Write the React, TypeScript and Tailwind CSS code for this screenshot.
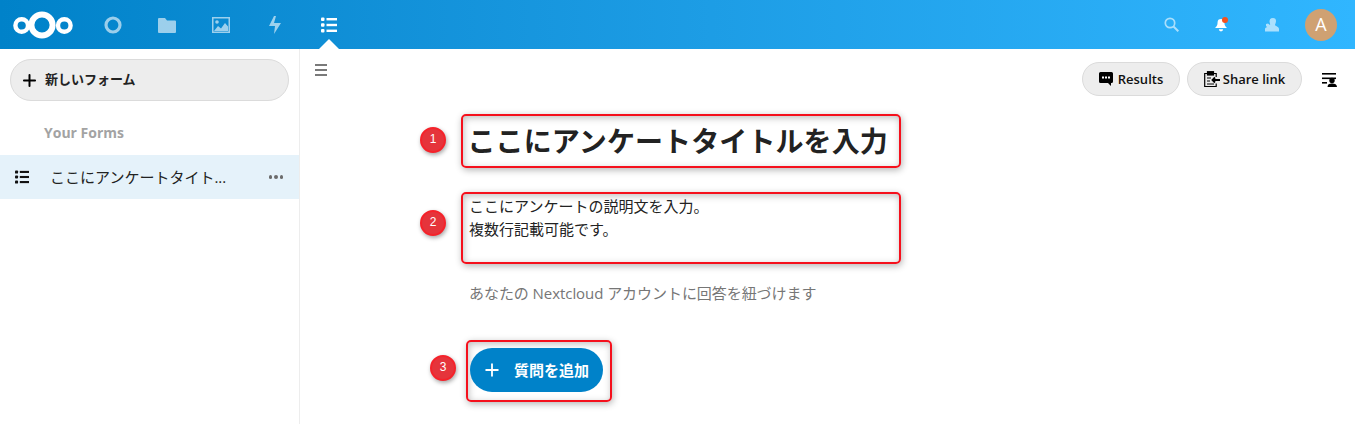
import React from "react";
import { Plus } from "lucide-react";

const font = "font-['Open_Sans','Noto_Sans_CJK_JP',sans-serif]";
const redBox =
  "relative rounded-[5px] border-2 border-[#f5101c] shadow-[1px_2px_7px_rgba(0,0,0,0.3),inset_1px_2px_7px_rgba(0,0,0,0.25)]";

const Logo = () => (
  <svg width="60" height="28" viewBox="0 0 60 28" fill="none" stroke="#fff">
    <circle cx="8.700" cy="14.500" r="6.300" strokeWidth="4.400" />
    <circle cx="29" cy="14" r="10.600" strokeWidth="6" />
    <circle cx="51.300" cy="14.500" r="6.300" strokeWidth="4.400" />
  </svg>
);

const ListIcon = ({ color = "#fff", w = 16 }: { color?: string; w?: number }) => (
  <svg width={w} height={w} viewBox="0 0 16 16" fill={color}>
    <rect x="0" y="0.500" width="3.500" height="3.500" rx="1" />
    <rect x="5.500" y="1" width="10.500" height="2.400" />
    <rect x="0" y="6.200" width="3.500" height="3.500" rx="1" />
    <rect x="5.500" y="6.800" width="10.500" height="2.400" />
    <rect x="0" y="12" width="3.500" height="3.500" rx="1" />
    <rect x="5.500" y="12.600" width="10.500" height="2.400" />
  </svg>
);

const NavIcon = ({ children, active }: { children: React.ReactNode; active?: boolean }) => (
  <div className={`relative flex h-[49px] w-[54px] items-center justify-center ${active ? "" : "opacity-60"}`}>
    {children}
    {active && (
      <div className="absolute bottom-0 left-1/2 h-0 w-0 -translate-x-1/2 border-x-[10px] border-b-[10px] border-x-transparent border-b-white" />
    )}
  </div>
);

const Badge = ({ n, className }: { n: number; className: string }) => (
  <div
    className={`absolute flex h-[26px] w-[26px] items-center justify-center rounded-full border-2 border-[#f5222a] bg-[#e5343b] pb-[2px] text-[12px] text-white shadow-[1px_2px_4px_rgba(0,0,0,0.35)] font-['Liberation_Sans',sans-serif] ${className}`}
  >
    {n}
  </div>
);

const App = () => {
  return (
    <div className={`flex h-[424px] w-[1355px] flex-col overflow-hidden bg-white ${font}`}>
      <header className="flex h-[49px] shrink-0 items-center bg-gradient-to-r from-[#0082c9] to-[#30b6ff]">
        <div className="ml-[13px] mr-[13px] flex items-center">
          <Logo />
        </div>
        <NavIcon>
          <svg width="18" height="18" viewBox="0 0 18 18" fill="none" stroke="#fff" strokeWidth="3.200">
            <circle cx="9" cy="9" r="7" />
          </svg>
        </NavIcon>
        <NavIcon>
          <svg width="18" height="16" viewBox="0 0 18 16" fill="#fff">
            <path d="M1 1h6l2 2.500h8a1 1 0 0 1 1 1V15a1 1 0 0 1-1 1H1a1 1 0 0 1-1-1V2a1 1 0 0 1 1-1z" />
          </svg>
        </NavIcon>
        <NavIcon>
          <svg width="18" height="16" viewBox="0 0 18 16" fill="none">
            <rect x="0.750" y="0.750" width="16.500" height="14.500" stroke="#fff" strokeWidth="1.500" />
            <path d="M2 14l4-5 3 2.500L13 6l3 3.500V14z" fill="#fff" />
            <circle cx="5" cy="5" r="1.800" fill="#fff" />
          </svg>
        </NavIcon>
        <NavIcon>
          <svg width="14" height="18" viewBox="0 0 14 18" fill="#fff">
            <path d="M6 0h2L6 7h7l-7 11 1-8H1z" />
          </svg>
        </NavIcon>
        <NavIcon active>
          <ListIcon />
        </NavIcon>
        <div className="ml-auto flex items-center">
          <div className="flex w-[50px] justify-center opacity-60">
            <svg width="15" height="15" viewBox="0 0 15 15" fill="none" stroke="#fff">
              <circle cx="6" cy="6" r="4.700" strokeWidth="1.700" />
              <path d="M9.500 9.500L14.300 14.300" strokeWidth="2" />
            </svg>
          </div>
          <div className="relative flex w-[50px] justify-center">
            <svg width="12" height="14" viewBox="0 0 14 16" fill="#fff">
              <path d="M7 1a4 4 0 0 1 4 4c0 3 .8 4.500 3 6.500H0c2.200-2 3-3.500 3-6.500a4 4 0 0 1 4-4zM4.500 13h5a2.500 2.500 0 0 1-5 0z" />
            </svg>
            <div className="absolute left-[26px] top-[-1px] h-[6px] w-[6px] rounded-full bg-[#f4511e]" />
          </div>
          <div className="flex w-[50px] justify-center opacity-60">
            <svg width="15" height="14" viewBox="0 0 15 14" fill="#fff">
              <path d="M9 0a3 3 0 0 1 3 3c0 2-1 3-1 4 0 1 4 1.500 4 4v2.500H1V11c0-1 1-1.500 2-2L2 8V6l2-.500L6 7c.500-1-.500-2-.500-4A3.500 3 0 0 1 9 0z" />
            </svg>
          </div>
          <div className="ml-[9px] mr-[18px] flex h-8 w-8 items-center justify-center rounded-full bg-[#cfa172] text-[18px] text-white">
            A
          </div>
        </div>
      </header>

      <div className="flex min-h-0 flex-1">
        <aside className="w-[300px] shrink-0 border-r border-[#ededed]">
          <div className="px-[10px] pt-[10px]">
            <button className="flex h-[42px] w-[279px] items-center rounded-full border border-[#dbdbdb] bg-[#ededed] pl-[9px] text-[13px] font-bold text-[#222]">
              <Plus size={19} strokeWidth={2.500} color="#000" />
              <span className="ml-[6px]">新しいフォーム</span>
            </button>
          </div>
          <div className="mt-[21px] h-[22px] pl-[44px] text-[14px] font-bold leading-[22px] text-[#a3a3a3]">
            Your Forms
          </div>
          <div className="mt-[11px] flex h-[44px] items-center bg-[#e5f2fa] pl-[15px] pr-[16px]">
            <ListIcon color="#111" w={14} />
            <span className="ml-[21px] flex-1 text-[15px] text-[#222]">ここにアンケートタイト...</span>
            <span className="flex gap-[2px]">
              <i className="h-[3.500px] w-[3.500px] rounded-full bg-[#6b6b6b]" />
              <i className="h-[3.500px] w-[3.500px] rounded-full bg-[#6b6b6b]" />
              <i className="h-[3.500px] w-[3.500px] rounded-full bg-[#6b6b6b]" />
            </span>
          </div>
        </aside>

        <main className="relative min-w-0 flex-1">
          <div className="flex h-[60px] items-center pl-[15px] pr-[18px]">
            <div className="mb-[18px] flex w-[12px] flex-col gap-[3px]">
              <i className="h-[2px] bg-[#7a7a7a]" />
              <i className="h-[2px] bg-[#7a7a7a]" />
              <i className="h-[2px] bg-[#7a7a7a]" />
            </div>
            <div className="ml-auto flex items-center">
              <button className="flex h-[34px] w-[98px] items-center justify-center gap-[5px] rounded-full border border-[#dbdbdb] bg-[#ededed] text-[13px] font-semibold text-[#111]">
                <svg width="14" height="14" viewBox="0 0 14 14">
                  <path d="M1.500 0h11A1.500 1.500 0 0 1 14 1.500v8A1.500 1.500 0 0 1 12.500 11H12v3l-3-3H1.500A1.500 1.500 0 0 1 0 9.500v-8A1.500 1.500 0 0 1 1.500 0z" fill="#000" />
                  <path d="M3 4.500h2v2H3zM6 4.500h2v2H6zM9 4.500h2v2H9z" fill="#fff" />
                </svg>
                <span className="pt-[2px]">Results</span>
              </button>
              <button className="ml-[7px] flex h-[34px] w-[115px] items-center justify-center gap-[3px] rounded-full border border-[#dbdbdb] bg-[#ededed] text-[13px] font-semibold text-[#111]">
                <svg width="16" height="16" viewBox="0 0 16 16" fill="none" stroke="#000" strokeWidth="1.200">
                  <path d="M3.500 2.500H.7v13h11.500v-3M9.500 2.500h2.700v3.500" />
                  <rect x="3.500" y="0.700" width="6" height="3.300" fill="#000" />
                  <path d="M3 7h4M3 10h3M3 13h7" strokeWidth="1" />
                  <path d="M16 9H8.500M11 6.500L8.500 9l2.500 2.500" strokeWidth="1.800" />
                </svg>
                <span className="pt-[2px]">Share link</span>
              </button>
              <div className="ml-[20px] mt-[2px]">
                <svg width="15" height="14" viewBox="0 0 15 14" fill="#000">
                  <rect x="0" y="0" width="14" height="1.600" />
                  <rect x="0" y="4.500" width="14" height="1.600" />
                  <rect x="0" y="9" width="5" height="1.600" />
                  <circle cx="10" cy="7.500" r="2.700" />
                  <path d="M5.500 14c0-2.500 1.500-3.500 4.500-3.500s5 1 5 3.500z" />
                </svg>
              </div>
            </div>
          </div>

          <div className="ml-[161px] mt-[5px] w-[440px]">
            <div className={`${redBox} h-[54px] px-[4.500px]`}>
              <Badge n={1} className="left-[-43px] top-[11px]" />
              <h1 className="whitespace-nowrap text-[28px] font-bold leading-[50px] tracking-[0.100px] text-[#222]">
                ここにアンケートタイトルを入力
              </h1>
            </div>
            <div className={`${redBox} mt-[24px] h-[72px] px-[6px] pt-[1px]`}>
              <Badge n={2} className="left-[-43px] top-[16px]" />
              <p className="text-[15px] leading-[23px] text-[#222]">
                ここにアンケートの説明文を入力。
                <br />
                複数行記載可能です。
              </p>
            </div>
            <p className="mt-[18px] pl-[8px] text-[15px] leading-[22px] tracking-[-0.060px] text-[#767676]">
              あなたの Nextcloud アカウントに回答を紐づけます
            </p>
            <div className={`${redBox} ml-[5px] mt-[36px] h-[62px] w-[146px] pl-[2px] pt-[6px]`}>
              <Badge n={3} className="left-[-38px] top-[13px]" />
              <button className="flex h-[44px] w-[133px] items-center rounded-full bg-[#0082c9] pl-[12px] text-[15px] font-bold text-white">
                <Plus size={20} color="#fff" strokeWidth={2.200} />
                <span className="ml-[12px] pt-[1px]">質問を追加</span>
              </button>
            </div>
          </div>
        </main>
      </div>
    </div>
  );
};

export default App;
